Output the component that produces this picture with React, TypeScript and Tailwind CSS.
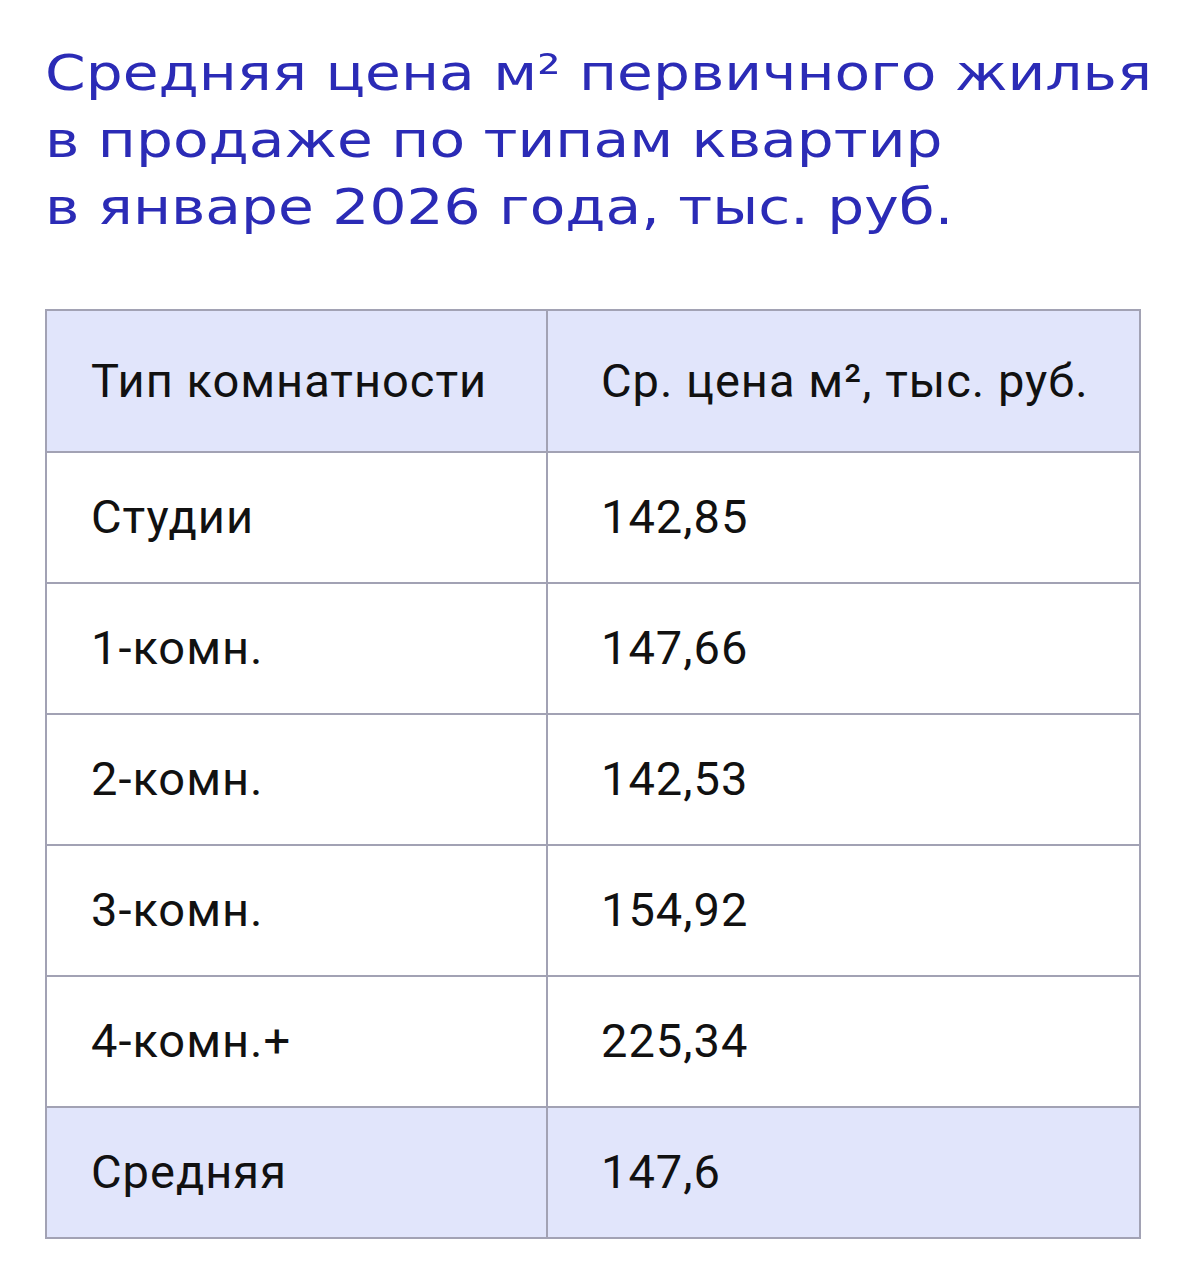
import React from 'react';

const rows = [
  { type: 'Студии', price: '142,85' },
  { type: '1-комн.', price: '147,66' },
  { type: '2-комн.', price: '142,53' },
  { type: '3-комн.', price: '154,92' },
  { type: '4-комн.+', price: '225,34' },
];

function Row({ left, right, head }: { left: string; right: string; head?: boolean }) {
  return (
    <div
      className={`grid grid-cols-[501px_1fr] border-t-2 border-[#a2a2b4] first:border-t-0 ${
        head ? 'h-[140px] bg-[#e1e5fb]' : 'h-[131px] bg-white'
      }`}
    >
      <div className="flex items-center pl-[44px] border-r-2 border-[#a2a2b4]">{left}</div>
      <div className="flex items-center pl-[53px]">{right}</div>
    </div>
  );
}

export default function App() {
  return (
    <div className="min-h-[1280px] bg-white px-[45px] pt-[40px] overflow-hidden">
      <h1
        className="w-fit text-[#2b2bb6] text-[50px] leading-[67px] tracking-[0px] origin-left scale-x-[1.165]"
        style={{ fontFamily: '"DejaVu Sans", sans-serif' }}
      >
        Средняя цена м² первичного жилья
        <br />
        в продаже по типам квартир
        <br />
        в январе 2026 года, тыс. руб.
      </h1>
      <div
        className="mt-[68px] w-[1096px] border-2 border-[#a2a2b4] text-[47px] text-[#111] tracking-[1px]"
        style={{ fontFamily: 'Roboto, sans-serif' }}
      >
        <Row head left="Тип комнатности" right="Ср. цена м², тыс. руб." />
        {rows.map((r) => (
          <Row key={r.type} left={r.type} right={r.price} />
        ))}
        <div className="grid grid-cols-[501px_1fr] border-t-2 border-[#a2a2b4] h-[131px] bg-[#e1e5fb]">
          <div className="flex items-center pl-[44px] border-r-2 border-[#a2a2b4]">Средняя</div>
          <div className="flex items-center pl-[53px]">147,6</div>
        </div>
      </div>
    </div>
  );
}
